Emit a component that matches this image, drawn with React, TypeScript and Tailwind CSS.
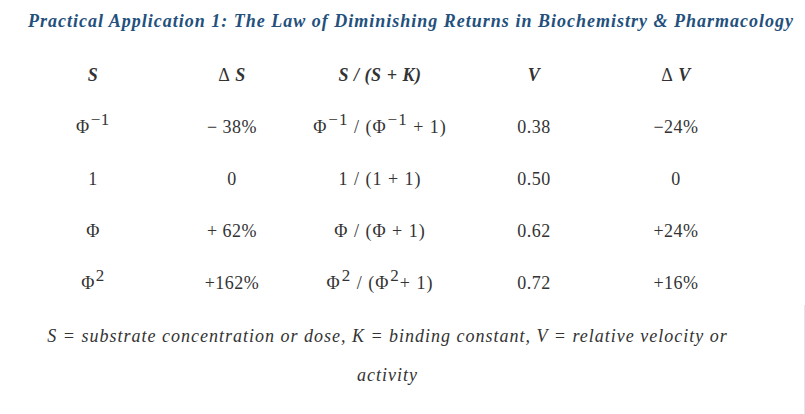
import React from "react";

const serif = { fontFamily: '"Liberation Serif", "Times New Roman", serif' };

function Phi({ sup }: { sup?: string }) {
  return (
    <span>
      Φ{sup ? <sup className="relative -top-[8px] ml-[1px] align-baseline text-[17px]">{sup}</sup> : null}
    </span>
  );
}

const cols = ["w-[138px]", "w-[140px]", "w-[156px]", "w-[152px]", "w-[132px]"];

function Row({ cells, header }: { cells: React.ReactNode[]; header?: boolean }) {
  return (
    <div className={`flex h-[52px] items-center ${header ? "font-bold italic" : ""}`}>
      {cells.map((c, i) => (
        <div key={i} className={`${cols[i]} text-center`}>
          {c}
        </div>
      ))}
    </div>
  );
}

export default function App() {
  return (
    <div className="relative h-[414px] w-[805px] bg-white text-[#333333]" style={serif}>
      <div className="pt-[8px] pl-[28px] text-[18px] font-bold italic tracking-[1px] text-[#23507c]">
        Practical Application 1: The Law of Diminishing Returns in Biochemistry &amp; Pharmacology
      </div>
      <div className="mt-[14px] pl-[24px] text-[18px] tracking-[0.5px]">
        <Row
          header
          cells={[
            "S",
            <span>
              <span className="not-italic font-normal">Δ</span> S
            </span>,
            "S / (S + K)",
            "V",
            <span>
              <span className="not-italic font-normal">Δ</span> V
            </span>,
          ]}
        />
        <Row
          cells={[
            <Phi sup="−1" />,
            "−  38%",
            <span className="tracking-[1px]">
              <Phi sup="−1" /> / (<Phi sup="−1" /> + 1)
            </span>,
            "0.38",
            "−24%",
          ]}
        />
        <Row cells={["1", "0", <span className="tracking-[1px]">1 / (1 + 1)</span>, "0.50", "0"]} />
        <Row cells={[<Phi />, "+ 62%", <span className="tracking-[1px]">Φ / (Φ + 1)</span>, "0.62", "+24%"]} />
        <Row
          cells={[
            <Phi sup="2" />,
            "+162%",
            <span className="tracking-[1px]">
              <Phi sup="2" /> / (<Phi sup="2" />+ 1)
            </span>,
            "0.72",
            "+16%",
          ]}
        />
      </div>
      <div className="mt-[8px] pr-[30px] text-center text-[18px] italic leading-[39px] tracking-[1px]">
        <div>S = substrate concentration or dose, K = binding constant, V = relative velocity or</div>
        <div>activity</div>
      </div>
      <div className="absolute right-0 top-[305px] h-[109px] w-px bg-[#e5e5e5]" />
    </div>
  );
}
